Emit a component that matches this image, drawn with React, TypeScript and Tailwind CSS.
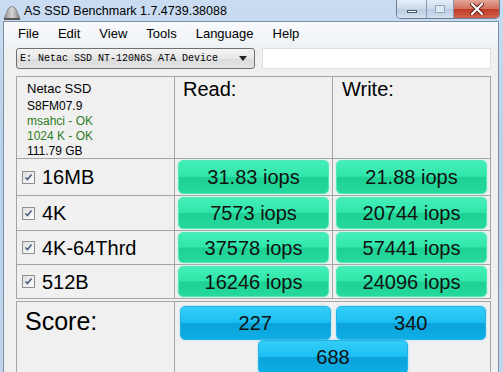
import type { ReactNode } from "react"

const sans = { fontFamily: '"Liberation Sans", Arial, sans-serif' }

function Check() {
  return (
    <div className="flex h-[13px] w-[13px] items-center justify-center border border-[#8f8f8f] bg-[linear-gradient(135deg,#dcdcdc,#ffffff)]">
      <svg width="9" height="9" viewBox="0 0 9 9">
        <path d="M1.5 4.5 L3.5 6.5 L7.5 1.5" fill="none" stroke="#4a5f80" strokeWidth="1.6" />
      </svg>
    </div>
  )
}

function Pill({ children, tone }: { children: ReactNode; tone: "green" | "blue" }) {
  const cls =
    tone === "green"
      ? "border-[#58e6b8] bg-[linear-gradient(to_bottom,#44efb9_0%,#30e6aa_48%,#1fd094_52%,#25d99c_100%)] shadow-[0_0_2px_#8ff3d2]"
      : "border-[#22b2e6] bg-[linear-gradient(to_bottom,#34cdf7_0%,#1cbff2_48%,#0aa2da_52%,#0eaee6_100%)] shadow-[0_0_2px_#7fd6f5]"
  return (
    <div
      className={`flex h-full w-full items-center justify-center rounded-[5px] border text-[20px] leading-none text-[#111] ${cls}`}
    >
      {children}
    </div>
  )
}

const rows = [
  { name: "16MB", read: "31.83 iops", write: "21.88 iops", h: "h-[37px]" },
  { name: "4K", read: "7573 iops", write: "20744 iops", h: "h-[35px]" },
  { name: "4K-64Thrd", read: "37578 iops", write: "57441 iops", h: "h-[34px]" },
  { name: "512B", read: "16246 iops", write: "24096 iops", h: "h-[34px]" },
]

function TitleBar() {
  return (
    <div className="flex h-[23px] items-start">
      <svg width="18" height="18" viewBox="0 0 18 18" className="ml-[3px] mt-[3px]">
        <defs>
          <linearGradient id="hd" x1="0" y1="0" x2="1" y2="0">
            <stop offset="0" stopColor="#8a8a8a" />
            <stop offset="0.5" stopColor="#d8d8d8" />
            <stop offset="1" stopColor="#7a7a7a" />
          </linearGradient>
        </defs>
        <path d="M1 16 L5 6 Q9 1 13 6 L17 16 Z" fill="url(#hd)" stroke="#666" strokeWidth="0.6" />
        <rect x="1" y="15" width="16" height="2" fill="#555" />
      </svg>
      <span className="ml-[3px] mt-[4px] text-[12.5px] leading-[15px] text-black" style={sans}>
        AS SSD Benchmark 1.7.4739.38088
      </span>
      <div className="ml-auto mr-[3px] flex h-[19px] overflow-hidden rounded-b-[5px] border border-t-0 border-[#6d7e96]">
        <div className="flex w-[30px] items-center justify-center border-r border-[#8798ae] bg-[linear-gradient(to_bottom,#e6eef8,#cbd9ea_50%,#b9cbe1_51%,#d3e1f0)]">
          <div className="mt-[5px] h-[3px] w-[10px] border border-[#4a5a70] bg-white" />
        </div>
        <div className="flex w-[27px] items-center justify-center border-r border-[#8798ae] bg-[linear-gradient(to_bottom,#e6eef8,#cbd9ea_50%,#b9cbe1_51%,#d3e1f0)]">
          <div className="h-[8px] w-[10px] border border-[#9aa8bb] bg-[#dfe7f1]" />
        </div>
        <div className="flex w-[45px] items-center justify-center bg-[linear-gradient(to_bottom,#e3a597,#d2705e_50%,#bf3a26_51%,#d1634a)]">
          <svg width="14" height="12" viewBox="0 0 14 12">
            <path d="M2 1 L12 11 M12 1 L2 11" stroke="#5a1a12" strokeWidth="4" strokeLinecap="round" />
            <path d="M2 1 L12 11 M12 1 L2 11" stroke="#ffffff" strokeWidth="2.2" strokeLinecap="round" />
          </svg>
        </div>
      </div>
    </div>
  )
}

export default function App() {
  return (
    <div
      className="flex h-[372px] w-[503px] flex-col overflow-hidden bg-[linear-gradient(to_bottom,#c9dcf1,#b9d0ea_40%,#bfd5ee)]"
      style={sans}
    >
      <TitleBar />
      <div className="ml-[3px] mr-[4px] flex flex-1 flex-col border-l border-r border-t border-[#7f90a6] bg-[#f0f0f0]">
        <div className="flex h-[24px] items-center gap-[19px] bg-[linear-gradient(to_bottom,#f9fafc,#eef2f7)] pl-[14px] text-[13px] text-black">
          <span>File</span>
          <span>Edit</span>
          <span>View</span>
          <span>Tools</span>
          <span>Language</span>
          <span>Help</span>
        </div>

        <div className="mt-[2px] flex items-center pl-[12px]">
          <div className="flex h-[21px] w-[239px] items-center justify-between rounded-[3px] border border-[#707070] bg-[linear-gradient(to_bottom,#f4f4f4,#e6e6e6_50%,#dadada_51%,#e4e4e4)] pl-[3px] pr-[7px]">
            <span className="text-[10px] text-black" style={{ fontFamily: '"Liberation Mono", "Courier New", monospace' }}>
              E: Netac SSD NT-120N6S ATA Device
            </span>
            <svg width="8" height="5" viewBox="0 0 8 5">
              <path d="M0 0 L8 0 L4 5 Z" fill="#222" />
            </svg>
          </div>
          <div className="ml-[7px] h-[21px] w-[229px] border border-[#dcdfe4] bg-white" />
        </div>

        <div className="ml-[12px] mt-[7px] w-[475px]">
          <div className="grid grid-cols-[158px_158px_158px] border-l border-t border-[#a5a5a5]">
            <div className="h-[82px] border-b border-r border-[#a5a5a5] pl-[10px] pt-[3px] text-black">
              <div className="text-[13px] leading-[17px]">Netac SSD</div>
              <div className="mt-[2px] text-[12px] leading-[15px]">S8FM07.9</div>
              <div className="text-[12px] leading-[15px] text-[#2d7d1e]">msahci - OK</div>
              <div className="text-[12px] leading-[15px] text-[#2d7d1e]">1024 K - OK</div>
              <div className="text-[12px] leading-[15px]">111.79 GB</div>
            </div>
            <div className="h-[82px] border-b border-r border-[#a5a5a5] pl-[8px] pt-[1px] text-[20px] leading-[23px] text-black">
              Read:
            </div>
            <div className="h-[82px] border-b border-r border-[#a5a5a5] pl-[9px] pt-[1px] text-[20px] leading-[23px] text-black">
              Write:
            </div>
            {rows.map((r) => (
              <div key={r.name} className="contents">
                <div className={`flex items-center border-b border-r border-[#a5a5a5] pl-[5px] ${r.h}`}>
                  <Check />
                  <span className="ml-[7px] text-[20px] leading-none text-black">{r.name}</span>
                </div>
                <div className={`border-b border-r border-[#a5a5a5] px-[3px] py-[1px] ${r.h}`}>
                  <Pill tone="green">{r.read}</Pill>
                </div>
                <div className={`border-b border-r border-[#a5a5a5] px-[3px] py-[1px] ${r.h}`}>
                  <Pill tone="green">{r.write}</Pill>
                </div>
              </div>
            ))}
          </div>

          <div className="mt-[2px] grid h-[80px] grid-cols-[158px_316px] border-l border-t border-r border-[#a5a5a5]">
            <div className="border-r border-[#a5a5a5] pl-[8px] pt-[5px] text-[25px] leading-[28px] text-black">Score:</div>
            <div className="flex flex-col items-center px-[5px] pt-[4px]">
              <div className="grid h-[34px] w-full grid-cols-2 gap-[5px]">
                <Pill tone="blue">227</Pill>
                <Pill tone="blue">340</Pill>
              </div>
              <div className="h-[34px] w-[150px]">
                <Pill tone="blue">688</Pill>
              </div>
            </div>
          </div>
        </div>
      </div>
    </div>
  )
}
